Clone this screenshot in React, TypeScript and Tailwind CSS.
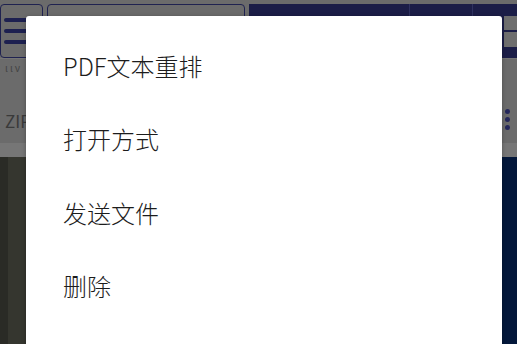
const items = ['PDF文本重排', '打开方式', '发送文件', '删除'];

export default function App() {
  return (
    <div
      className="relative w-[517px] h-[344px] overflow-hidden bg-[#6b6b6b]"
      style={{ fontFamily: '"Noto Sans CJK SC", "Noto Sans", sans-serif' }}
    >
      {/* dimmed page behind the dialog */}
      <div className="flex flex-col h-full">
        <div className="flex h-[58px] pt-[4px] gap-[4px]">
          <div className="w-[43px] h-[54px] rounded-[4px] border border-[#1f2250] flex flex-col justify-center gap-[7px] pl-[3px]">
            <div className="h-[4px] w-[30px] rounded-full bg-[#1d2050]" />
            <div className="h-[4px] w-[30px] rounded-full bg-[#1d2050]" />
            <div className="h-[4px] w-[30px] rounded-full bg-[#1d2050]" />
          </div>
          <div className="w-[198px] h-[54px] rounded-[4px] border border-[#1f2250]" />
          <div className="flex-1 flex bg-[#1b1d47]">
            <div className="w-[161px] border-r border-[#2e3160]" />
            <div className="w-[63px] border-r border-[#2e3160]" />
            <div className="flex-1 flex flex-col items-end pt-[12px] gap-[2px]">
              <div className="w-[13px] h-[14px] bg-[#6e6e6e]" />
              <div className="w-[13px] h-[15px] bg-[#6e6e6e]" />
            </div>
          </div>
        </div>
        <div className="h-[85px] flex flex-col justify-between pl-[5px] pr-[7px] pt-[4px] pb-[14px] border-t border-[#757575]">
          <div className="text-[10px] leading-none text-[#444] tracking-[2px]">ιιν</div>
          <div className="flex items-end justify-between">
            <div className="text-[17px] leading-none text-[#3a3a3a]">ZIP</div>
            <div className="flex flex-col gap-[3px] mb-[-1px]">
              <div className="w-[5px] h-[5px] rounded-full bg-[#24275a]" />
              <div className="w-[5px] h-[5px] rounded-full bg-[#24275a]" />
              <div className="w-[5px] h-[5px] rounded-full bg-[#24275a]" />
            </div>
          </div>
        </div>
        <div className="h-[14px] bg-[#767676]" />
        <div className="flex-1 flex">
          <div className="w-[8px] bg-[#2a2b26]" />
          <div className="w-[18px] bg-[#35362f]" />
          <div className="flex-1 bg-[#2c2d28]" />
          <div className="w-[260px] bg-[#03173a]" />
        </div>
      </div>

      {/* menu dialog */}
      <div className="absolute left-[26px] top-[16px] w-[476px] h-[340px] bg-white rounded-[3px] shadow-[0_1px_4px_rgba(0,0,0,0.3)] pt-[13px]">
        {items.map((label) => (
          <div key={label} className="h-[73.5px] flex items-center pl-[37px] text-[24px] font-light text-[#1c1c1c]">
            {label}
          </div>
        ))}
      </div>
    </div>
  );
}
